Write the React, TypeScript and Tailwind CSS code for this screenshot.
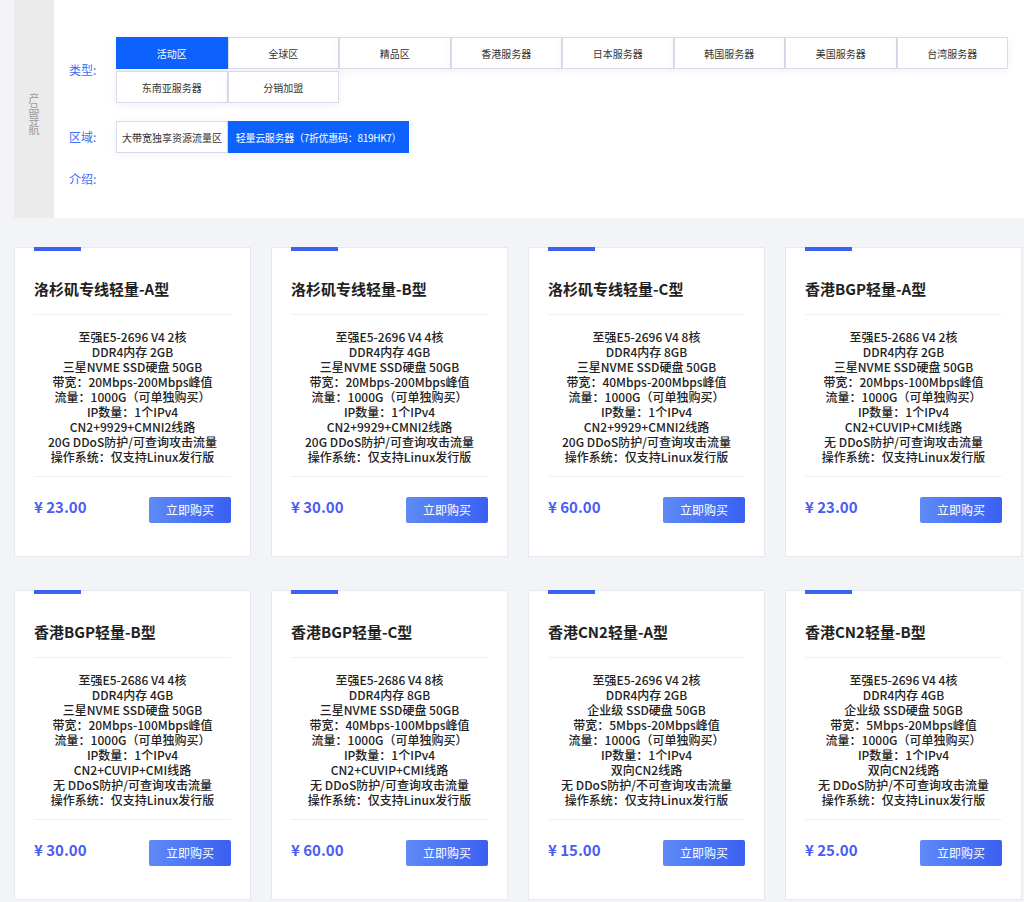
import React from "react";

const types = ["活动区", "全球区", "精品区", "香港服务器", "日本服务器", "韩国服务器", "美国服务器", "台湾服务器", "东南亚服务器", "分销加盟"];

type Card = { title: string; specs: string[]; price: string };

const cards: Card[] = [
  {
    title: "洛杉矶专线轻量-A型",
    specs: ["至强E5-2696 V4 2核", "DDR4内存 2GB", "三星NVME SSD硬盘 50GB", "带宽：20Mbps-200Mbps峰值", "流量：1000G（可单独购买）", "IP数量：1个IPv4", "CN2+9929+CMNI2线路", "20G DDoS防护/可查询攻击流量", "操作系统：仅支持Linux发行版"],
    price: "¥ 23.00",
  },
  {
    title: "洛杉矶专线轻量-B型",
    specs: ["至强E5-2696 V4 4核", "DDR4内存 4GB", "三星NVME SSD硬盘 50GB", "带宽：20Mbps-200Mbps峰值", "流量：1000G（可单独购买）", "IP数量：1个IPv4", "CN2+9929+CMNI2线路", "20G DDoS防护/可查询攻击流量", "操作系统：仅支持Linux发行版"],
    price: "¥ 30.00",
  },
  {
    title: "洛杉矶专线轻量-C型",
    specs: ["至强E5-2696 V4 8核", "DDR4内存 8GB", "三星NVME SSD硬盘 50GB", "带宽：40Mbps-200Mbps峰值", "流量：1000G（可单独购买）", "IP数量：1个IPv4", "CN2+9929+CMNI2线路", "20G DDoS防护/可查询攻击流量", "操作系统：仅支持Linux发行版"],
    price: "¥ 60.00",
  },
  {
    title: "香港BGP轻量-A型",
    specs: ["至强E5-2686 V4 2核", "DDR4内存 2GB", "三星NVME SSD硬盘 50GB", "带宽：20Mbps-100Mbps峰值", "流量：1000G（可单独购买）", "IP数量：1个IPv4", "CN2+CUVIP+CMI线路", "无 DDoS防护/可查询攻击流量", "操作系统：仅支持Linux发行版"],
    price: "¥ 23.00",
  },
  {
    title: "香港BGP轻量-B型",
    specs: ["至强E5-2686 V4 4核", "DDR4内存 4GB", "三星NVME SSD硬盘 50GB", "带宽：20Mbps-100Mbps峰值", "流量：1000G（可单独购买）", "IP数量：1个IPv4", "CN2+CUVIP+CMI线路", "无 DDoS防护/可查询攻击流量", "操作系统：仅支持Linux发行版"],
    price: "¥ 30.00",
  },
  {
    title: "香港BGP轻量-C型",
    specs: ["至强E5-2686 V4 8核", "DDR4内存 8GB", "三星NVME SSD硬盘 50GB", "带宽：40Mbps-100Mbps峰值", "流量：1000G（可单独购买）", "IP数量：1个IPv4", "CN2+CUVIP+CMI线路", "无 DDoS防护/可查询攻击流量", "操作系统：仅支持Linux发行版"],
    price: "¥ 60.00",
  },
  {
    title: "香港CN2轻量-A型",
    specs: ["至强E5-2696 V4 2核", "DDR4内存 2GB", "企业级 SSD硬盘 50GB", "带宽：5Mbps-20Mbps峰值", "流量：1000G（可单独购买）", "IP数量：1个IPv4", "双向CN2线路", "无 DDoS防护/不可查询攻击流量", "操作系统：仅支持Linux发行版"],
    price: "¥ 15.00",
  },
  {
    title: "香港CN2轻量-B型",
    specs: ["至强E5-2696 V4 4核", "DDR4内存 4GB", "企业级 SSD硬盘 50GB", "带宽：5Mbps-20Mbps峰值", "流量：1000G（可单独购买）", "IP数量：1个IPv4", "双向CN2线路", "无 DDoS防护/不可查询攻击流量", "操作系统：仅支持Linux发行版"],
    price: "¥ 25.00",
  },
];

function NavButton({ label, active }: { label: string; active?: boolean }) {
  return (
    <div
      className={
        "h-[32px] flex items-center justify-center text-[10px] whitespace-nowrap border shadow-[0_2px_8px_rgba(60,80,160,0.08)] " +
        (active ? "bg-[#0d62fe] border-[#0d62fe] text-white" : "bg-white border-[#d8dbea] text-[#333]")
      }
    >
      {label}
    </div>
  );
}

export default function App() {
  return (
    <div className="min-h-[902px] bg-[#f3f4f7] font-['Noto_Sans_CJK_SC','Noto_Sans',sans-serif] overflow-hidden">
      <div className="flex ml-[14px] h-[218px]">
        <div className="w-[40px] bg-[#ebebeb] flex items-center justify-center pt-[10px]">
          <span className="[writing-mode:vertical-lr] text-[11px] leading-[12px] tracking-[-0.5px] text-[#9a9a9a]">产品导航</span>
        </div>
        <div className="flex-1 bg-white pl-[15px] pt-[37px]">
          <div className="flex items-center">
            <div className="w-[47px] text-[12px] text-[#3d6df2]">类型:</div>
            <div className="grid grid-cols-8 w-[892px] gap-y-[2px]">
              {types.map((t, i) => (
                <NavButton key={t} label={t} active={i === 0} />
              ))}
            </div>
          </div>
          <div className="flex items-center mt-[18px]">
            <div className="w-[47px] text-[12px] text-[#3d6df2]">区域:</div>
            <div className="flex">
              <div className="w-[112px]">
                <NavButton label="大带宽独享资源流量区" />
              </div>
              <div className="w-[181px] tracking-[-0.3px]">
                <NavButton label="轻量云服务器（7折优惠码：819HK7）" active />
              </div>
            </div>
          </div>
          <div className="flex items-center mt-[16px] h-[20px]">
            <div className="w-[47px] text-[12px] text-[#3d6df2]">介绍:</div>
          </div>
        </div>
      </div>

      <div className="grid grid-cols-4 gap-x-[20px] gap-y-[33px] w-[1008px] ml-[14px] mt-[29px]">
        {cards.map((c) => (
          <div key={c.title} className="bg-white border border-[#e6e9f0] px-[19px] h-[310px]">
            <div className="w-[47px] h-[4px] bg-[#3c62f0] -mt-px"></div>
            <div className="mt-[28px] text-[15px] leading-[20px] font-bold text-[#222]">{c.title}</div>
            <div className="mt-[15px] h-px bg-[#eef0f6]"></div>
            <div className="pt-[14px] pb-[12px] text-center text-[12px] leading-[15px] font-medium text-[#222]">
              {c.specs.map((s) => (
                <div key={s}>{s}</div>
              ))}
            </div>
            <div className="h-px bg-[#eef0f6]"></div>
            <div className="mt-[20px] flex items-center justify-between">
              <div className="text-[15px] font-bold text-[#4a5cf2] -mt-[6px]">{c.price}</div>
              <div className="w-[82px] h-[26px] flex items-center justify-center text-[12px] text-white bg-gradient-to-r from-[#5f8af6] to-[#3a5ff2] rounded-[2px]">
                立即购买
              </div>
            </div>
          </div>
        ))}
      </div>
    </div>
  );
}
